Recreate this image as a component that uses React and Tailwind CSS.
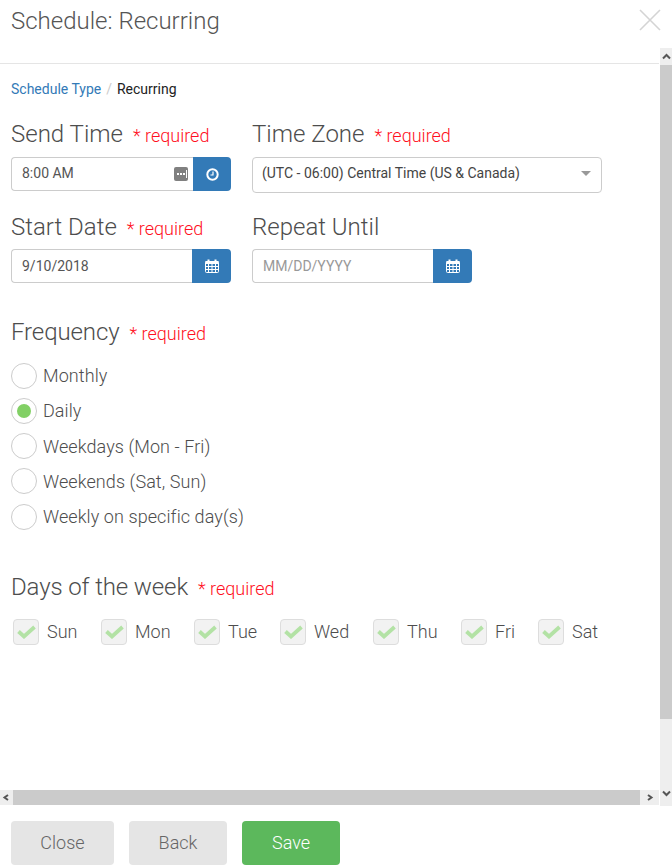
import React from 'react';

const CalendarIcon = () => (
  <svg width="14" height="14" viewBox="0 0 14 14" fill="none" stroke="#fff" strokeWidth="1">
    <rect x="0.5" y="2.5" width="13" height="11" rx="1" />
    <rect x="0.5" y="2" width="13" height="3" fill="#fff" stroke="none" />
    <path d="M0.5 7.5h13M0.5 10.5h13M3.5 5v8M7 5v8M10.5 5v8" />
    <path d="M3.5 0.5v3M10.5 0.5v3" strokeWidth="2" />
  </svg>
);

const ClockIcon = () => (
  <svg width="13" height="13" viewBox="0 0 13 13" fill="none" stroke="#fff">
    <circle cx="6.5" cy="6.5" r="5.2" strokeWidth="2" />
    <path d="M7 3.5v3.5H4.5" strokeWidth="1.2" />
  </svg>
);

const Required = () => <span className="ml-[10px] text-[18px] text-[#ff0f22]">* required</span>;

const Heading = ({ children, required }) => (
  <div className="flex h-[30px] items-baseline text-[24px] leading-[30px] text-[#4d4d4d]">
    {children}
    {required && <Required />}
  </div>
);

const DateField = ({ value, placeholder, width }) => (
  <div className={`flex h-[34px] ${width}`}>
    <div className={`flex-1 rounded-l-[4px] border border-r-0 border-[#ccc] pl-[10px] text-[14px] font-normal leading-[32px] ${value ? 'text-[#555]' : 'text-[#999]'}`}>
      {value || placeholder}
    </div>
    <div className="flex w-[39px] items-center justify-center rounded-r-[4px] bg-[#337ab7]">
      <CalendarIcon />
    </div>
  </div>
);

const Radio = ({ label, checked }) => (
  <div className="flex h-[35.25px] items-center gap-[6px]">
    <div className="flex h-[26px] w-[26px] items-center justify-center rounded-full border border-[#ccc]">
      {checked && <div className="h-[14px] w-[14px] rounded-full bg-[#82d065]" />}
    </div>
    <span className="tracking-[0.08px]">{label}</span>
  </div>
);

const Day = ({ label, width }) => (
  <div className={`flex items-center gap-[8px] ${width}`}>
    <div className="flex h-[26px] w-[26px] items-center justify-center rounded-[4px] border border-[#ddd] bg-[#f2f2f2]">
      <svg width="19" height="14" viewBox="0 0 19 14" fill="none" stroke="#b3e2a5" strokeWidth="3.8">
        <path d="M1.5 6.5l5.5 5L17.5 2" />
      </svg>
    </div>
    <span>{label}</span>
  </div>
);

const ScrollArrow = ({ d, className }) => (
  <div className={`flex items-center justify-center bg-[#eee] ${className}`}>
    <svg width="9" height="7" viewBox="0 0 9 7" fill="none" stroke="#555" strokeWidth="2">
      <path d={d} />
    </svg>
  </div>
);

export default function App() {
  return (
    <div className="h-[868px] w-[672px] overflow-hidden bg-white font-['Roboto',sans-serif] font-light text-[#4d4d4d]">
      <div className="flex h-[48px] items-start justify-between pl-[11px] pr-[11px] pt-[5px]">
        <h1 className="text-[24px] leading-[32px] text-[#555]">Schedule: Recurring</h1>
        <svg width="22" height="22" viewBox="0 0 22 22" stroke="#d4d4d4" strokeWidth="1.6" className="mt-[4px]">
          <path d="M1 1l20 20M21 1L1 21" />
        </svg>
      </div>

      <div className="flex h-[758px]">
        <div className="flex w-[659px] flex-col">
          <div className="h-[16px] border-b border-[#e5e5e5]" />

          <div className="h-[726px] pl-[11px]">
            <div className="flex pt-[15px] text-[14px] font-normal leading-[20px]">
              <span className="text-[#337ab7]">Schedule Type</span>
              <span className="mx-[5px] text-[#ccc]">/</span>
              <span className="text-[#222]">Recurring</span>
            </div>

            <div className="mt-[20px] flex gap-[21px]">
              <div className="w-[220px]">
                <Heading required>Send Time</Heading>
                <div className="mt-[8px] flex h-[34px]">
                  <div className="flex flex-1 items-center justify-between rounded-l-[4px] border border-r-0 border-[#ccc] pb-[1px] pl-[10px] pr-[5px] text-[14px] font-normal text-[#555]">
                    8:00 AM
                    <div className="flex h-[14px] w-[14px] items-center justify-end gap-[1px] rounded-[2px] bg-[#808080] pr-[1px]">
                      <span className="h-[2px] w-[2px] bg-white" />
                      <span className="h-[2px] w-[2px] bg-white" />
                      <span className="h-[2px] w-[2px] bg-white" />
                      <span className="h-[8px] w-[1px] bg-white" />
                    </div>
                  </div>
                  <div className="flex w-[38px] items-center justify-center rounded-r-[4px] bg-[#337ab7]">
                    <ClockIcon />
                  </div>
                </div>
              </div>
              <div>
                <Heading required>Time Zone</Heading>
                <div className="mt-[8px] flex h-[36px] w-[350px] items-center justify-between rounded-[4px] border border-[#ccc] pb-[3px] pl-[9px] pr-[10px] text-[14px] font-normal text-[#444]">
                  (UTC - 06:00) Central Time (US &amp; Canada)
                  <div className="h-0 w-0 border-x-[5px] border-t-[5px] border-x-transparent border-t-[#999]" />
                </div>
              </div>
            </div>

            <div className="mt-[19px] flex gap-[21px]">
              <div className="w-[220px]">
                <Heading required>Start Date</Heading>
                <div className="mt-[7px]">
                  <DateField value="9/10/2018" width="w-[220px]" />
                </div>
              </div>
              <div>
                <Heading>Repeat Until</Heading>
                <div className="mt-[7px]">
                  <DateField placeholder="MM/DD/YYYY" width="w-[220px]" />
                </div>
              </div>
            </div>

            <div className="mt-[34px]">
              <Heading required><span className="tracking-[-0.1px]">Frequency</span></Heading>
            </div>
            <div className="mt-[11px] text-[18px]">
              <Radio label="Monthly" />
              <Radio label="Daily" checked />
              <Radio label="Weekdays (Mon - Fri)" />
              <Radio label="Weekends (Sat, Sun)" />
              <Radio label="Weekly on specific day(s)" />
            </div>

            <div className="mt-[38px]">
              <Heading required><span className="tracking-[-0.12px]">Days of the week</span></Heading>
            </div>
            <div className="ml-[2px] mt-[16px] flex text-[18px]">
              <Day label="Sun" width="w-[88px]" />
              <Day label="Mon" width="w-[93px]" />
              <Day label="Tue" width="w-[86px]" />
              <Day label="Wed" width="w-[93px]" />
              <Day label="Thu" width="w-[88px]" />
              <Day label="Fri" width="w-[77px]" />
              <Day label="Sat" />
            </div>
          </div>

          <div className="flex h-[15px]">
            <ScrollArrow d="M6 1L2.5 3.5 6 6" className="w-[13px]" />
            <div className="flex-1 bg-[#cbcbcb]" />
            <ScrollArrow d="M3 1L6.5 3.5 3 6" className="w-[19px]" />
          </div>
        </div>

        <div className="ml-[1px] flex w-[12px] flex-col bg-[#eee]">
          <ScrollArrow d="M1 5.5L4.5 2 8 5.5" className="h-[17px]" />
          <div className="h-[654px] bg-[#cbcbcb]" />
          <div className="flex-1" />
          <ScrollArrow d="M1 1.5L4.5 5 8 1.5" className="h-[25px]" />
        </div>
      </div>

      <div className="flex gap-[15px] pl-[11px] pt-[15px] text-[18px]">
        <button className="h-[44px] w-[103px] rounded-[4px] bg-[#e5e5e5] pb-[2px] font-light text-[#666]">Close</button>
        <button className="h-[44px] w-[98px] rounded-[4px] bg-[#e5e5e5] pb-[2px] font-light text-[#666]">Back</button>
        <button className="h-[44px] w-[98px] rounded-[4px] bg-[#5cb85c] pb-[2px] font-light text-white">Save</button>
      </div>
    </div>
  );
}
